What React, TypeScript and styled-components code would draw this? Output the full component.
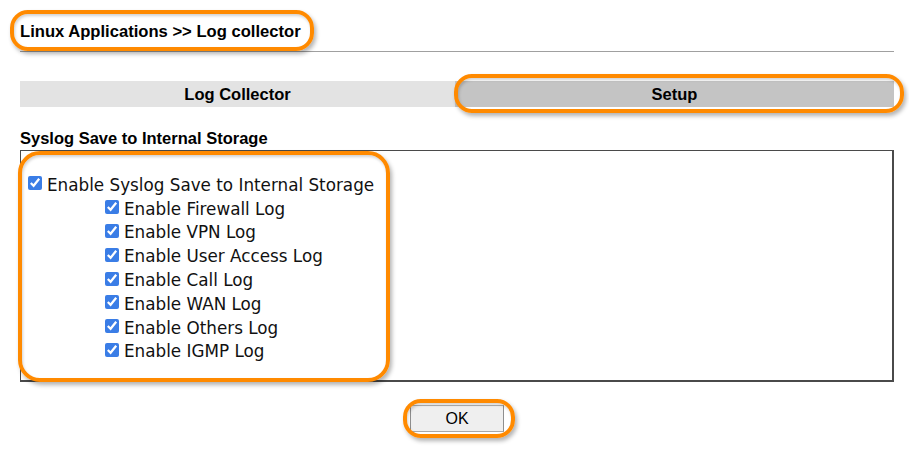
import React from "react";
import styled, { createGlobalStyle } from "styled-components";

const Global = createGlobalStyle`
  html, body { margin: 0; padding: 0; background: #ffffff; }
  body { font-family: "Liberation Sans", Arial, sans-serif; color: #000; }
`;

const Page = styled.div`
  position: relative;
  width: 909px;
  height: 459px;
  box-sizing: border-box;
  padding: 0 15px 0 20px;
`;

const Header = styled.div`
  padding: 22px 0 9px;
  line-height: 20px;
  font-size: 16.6px;
  font-weight: bold;
  border-bottom: 1px solid #a0a0a0;
`;

const Tabs = styled.div`
  margin-top: 29px;
  display: grid;
  grid-template-columns: 435px 439px;
  height: 26px;
`;

const Tab = styled.div<{ $active?: boolean }>`
  display: flex;
  align-items: center;
  justify-content: center;
  font-size: 16.5px;
  font-weight: bold;
  background: ${(p) => (p.$active ? "#c4c4c4" : "#e3e3e3")};
`;

const SectionTitle = styled.div`
  margin-top: 22px;
  font-size: 16.5px;
  font-weight: bold;
  line-height: 18px;
  height: 21px;
`;

const Box = styled.div`
  width: 874px;
  height: 232px;
  box-sizing: border-box;
  border: 2px solid #4a4a4a;
  border-top-width: 1px;
  border-left-width: 1px;
  padding: 22px 0 0 7px;
  font-family: "DejaVu Sans", Verdana, sans-serif;
  font-size: 16.8px;
`;

const Row = styled.label<{ $indent?: number }>`
  display: flex;
  align-items: center;
  height: 23.8px;
  padding-left: ${(p) => p.$indent ?? 0}px;
  color: #111;
`;

const Check = styled.input`
  width: 14px;
  height: 14px;
  margin: 0 5px 3px 0;
  accent-color: #3a7de6;
`;

const Footer = styled.div`
  display: flex;
  justify-content: center;
  padding-top: 23px;
`;

const Button = styled.button`
  width: 94px;
  height: 27px;
  background: #efefef;
  border: 1px solid #8f8f8f;
  border-top-color: #b0b0b0;
  border-bottom-color: #a8a8a8;
  font-family: "Liberation Sans", Arial, sans-serif;
  font-size: 16px;
  color: #000;
  padding: 0;
`;

const Highlight = styled.div`
  position: absolute;
  box-sizing: border-box;
  border: 4px solid #ff8a00;
  border-radius: 18px;
  box-shadow: 2px 3px 4px rgba(0, 0, 0, 0.3), inset 1px 2px 3px rgba(0, 0, 0, 0.18);
  pointer-events: none;
`;

const items = [
  "Enable Firewall Log",
  "Enable VPN Log",
  "Enable User Access Log",
  "Enable Call Log",
  "Enable WAN Log",
  "Enable Others Log",
  "Enable IGMP Log",
];

export default function App() {
  return (
    <>
      <Global />
      <Page>
        <Header>Linux Applications &gt;&gt; Log collector</Header>
        <Tabs>
          <Tab>Log Collector</Tab>
          <Tab $active>Setup</Tab>
        </Tabs>
        <SectionTitle>Syslog Save to Internal Storage</SectionTitle>
        <Box>
          <Row>
            <Check type="checkbox" defaultChecked />
            Enable Syslog Save to Internal Storage
          </Row>
          {items.map((t) => (
            <Row key={t} $indent={77}>
              <Check type="checkbox" defaultChecked />
              {t}
            </Row>
          ))}
        </Box>
        <Footer>
          <Button>OK</Button>
        </Footer>
        <Highlight style={{ left: 10, top: 10, width: 304, height: 41 }} />
        <Highlight style={{ left: 454, top: 74, width: 450, height: 39 }} />
        <Highlight style={{ left: 18, top: 151, width: 372, height: 231, borderRadius: 22 }} />
        <Highlight style={{ left: 403, top: 399, width: 112, height: 39 }} />
      </Page>
    </>
  );
}
